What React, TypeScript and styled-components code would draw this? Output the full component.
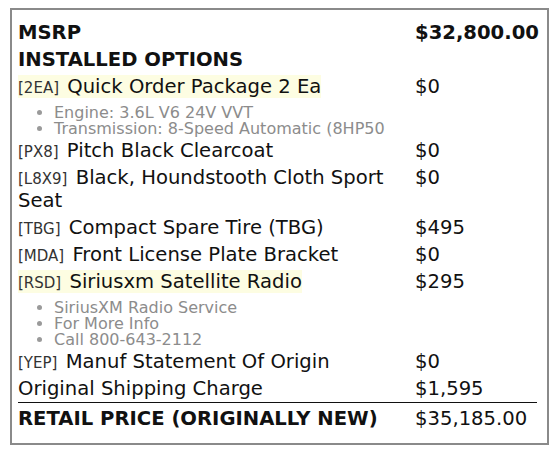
import styled, { createGlobalStyle } from "styled-components";

const GlobalStyle = createGlobalStyle`
  body {
    margin: 0;
    background: #ffffff;
    font-family: "DejaVu Sans", Verdana, sans-serif;
    color: #111;
  }
`;

const Sheet = styled.div`
  margin: 8px 0 0 10px;
  width: 539px;
  box-sizing: border-box;
  border: 2px solid #8a8a8a;
  padding: 9px 10px 11px 6px;
`;

const Row = styled.div<{ $total?: boolean }>`
  display: grid;
  grid-template-columns: 397px 1fr;
  padding: ${(p) => (p.$total ? "4px 0 2px" : "2px 0")};
  font-size: 19.6px;
  line-height: 23px;
  ${(p) => p.$total && "border-top: 1px solid #111;"}
`;

const Label = styled.div<{ $bold?: boolean }>`
  font-weight: ${(p) => (p.$bold ? 700 : 400)};
`;

const Price = styled.div<{ $bold?: boolean }>`
  font-weight: ${(p) => (p.$bold ? 700 : 400)};
`;

const Mark = styled.span<{ $hl?: boolean }>`
  background: ${(p) => (p.$hl ? "#fdfde2" : "transparent")};
`;

const Code = styled.span`
  font-size: 15px;
  line-height: 1;
  color: #333;
  margin-right: 2px;
`;

const Details = styled.ul`
  margin: 7px 0 -2px;
  padding: 0 0 0 36px;
  font-size: 16px;
  line-height: 16px;
  color: #8c8c8c;
  white-space: nowrap;
  li::marker {
    color: #9a9a9a;
  }
`;

type Option = {
  code?: string;
  name: string;
  price: string;
  hl?: boolean;
  details?: string[];
};

const options: Option[] = [
  {
    code: "2EA",
    name: "Quick Order Package 2 Ea",
    price: "$0",
    hl: true,
    details: ["Engine: 3.6L V6 24V VVT", "Transmission: 8-Speed Automatic (8HP50"],
  },
  { code: "PX8", name: "Pitch Black Clearcoat", price: "$0" },
  { code: "L8X9", name: "Black, Houndstooth Cloth Sport Seat", price: "$0" },
  { code: "TBG", name: "Compact Spare Tire (TBG)", price: "$495" },
  { code: "MDA", name: "Front License Plate Bracket", price: "$0" },
  {
    code: "RSD",
    name: "Siriusxm Satellite Radio",
    price: "$295",
    hl: true,
    details: ["SiriusXM Radio Service", "For More Info", "Call 800-643-2112"],
  },
  { code: "YEP", name: "Manuf Statement Of Origin", price: "$0" },
  { name: "Original Shipping Charge", price: "$1,595" },
];

export default function App() {
  return (
    <>
      <GlobalStyle />
      <Sheet>
        <Row>
          <Label $bold>MSRP</Label>
          <Price $bold>$32,800.00</Price>
        </Row>
        <Row>
          <Label $bold>INSTALLED OPTIONS</Label>
          <Price />
        </Row>
        {options.map((o) => (
          <Row key={o.name}>
            <Label>
              <Mark $hl={o.hl}>
                {o.code && <Code>[{o.code}]</Code>}
                {o.code ? " " : ""}
                {o.name}
              </Mark>
              {o.details && (
                <Details>
                  {o.details.map((d) => (
                    <li key={d}>{d}</li>
                  ))}
                </Details>
              )}
            </Label>
            <Price>{o.price}</Price>
          </Row>
        ))}
        <Row $total>
          <Label $bold>RETAIL PRICE (ORIGINALLY NEW)</Label>
          <Price>$35,185.00</Price>
        </Row>
      </Sheet>
    </>
  );
}
